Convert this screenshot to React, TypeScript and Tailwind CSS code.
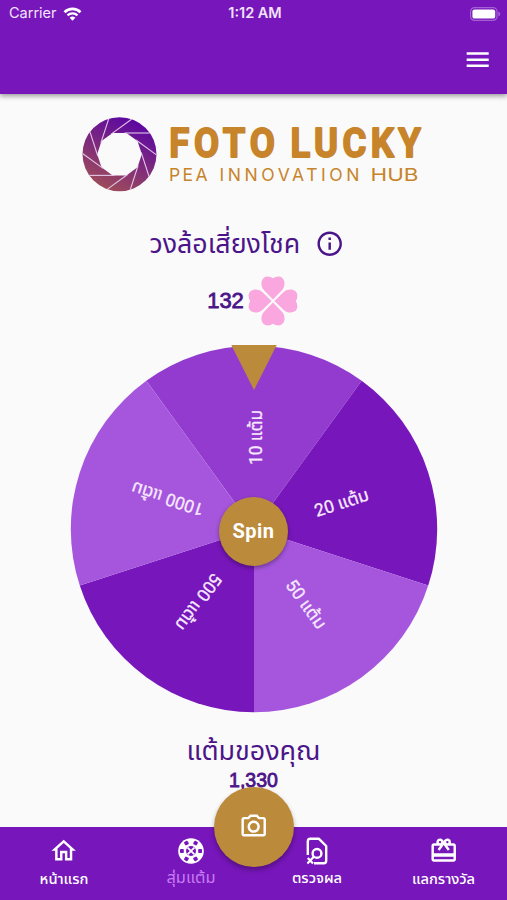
import {
  MdInfoOutline,
  MdMenu,
  MdOutlineHome,
  MdOutlinePhotoCamera,
  MdOutlineRedeem,
} from "react-icons/md";

const prizes = [
  { text: "10 แต้ม", angle: -90, color: "#933bcf", width: 55 },
  { text: "20 แต้ม", angle: -18, color: "#7716ba", width: 56 },
  { text: "50 แต้ม", angle: 54, color: "#a556dd", width: 56 },
  { text: "500 แต้ม", angle: 126, color: "#7716ba", width: 66 },
  { text: "1000 แต้ม", angle: 198, color: "#a556dd", width: 75 },
];

const RADIUS = 183.2;

function slicePath(angle: number) {
  const point = (deg: number) => {
    const rad = (deg * Math.PI) / 180;
    return `${RADIUS * Math.cos(rad)} ${RADIUS * Math.sin(rad)}`;
  };
  return `M0 0 L${point(angle - 36)} A${RADIUS} ${RADIUS} 0 0 1 ${point(angle + 36)} Z`;
}

function StatusBar() {
  return (
    <div className="grid h-[27px] grid-cols-3 items-center pl-[9px] pr-[6px] text-[14.5px] leading-none text-[#f3e3fb]">
      <div className="flex items-center gap-[6px]">
        <span>Carrier</span>
        <svg width="19" height="14" viewBox="0 0 18 14" fill="none">
          <path d="M1 5.2a11.4 11.4 0 0 1 16 0" stroke="#fff" strokeWidth="2.7" />
          <path d="M4 8.4a7.2 7.2 0 0 1 10 0" stroke="#fff" strokeWidth="2.3" />
          <path d="M9 13.8 6.1 10.8a4.2 4.2 0 0 1 5.8 0z" fill="#fff" />
        </svg>
      </div>
      <span className="text-center font-semibold">1:12 AM</span>
      <svg className="justify-self-end" width="31" height="14" viewBox="0 0 31 14">
        <rect x=".6" y=".6" width="26.4" height="12.8" rx="4" fill="none" stroke="#a561d4" strokeWidth="1.2" />
        <rect x="2.4" y="2.4" width="22.8" height="9.2" rx="2.2" fill="#fff" />
        <path d="M28.3 4.6v4.8q2-.8 2-2.4t-2-2.4" fill="#a561d4" />
      </svg>
    </div>
  );
}

function Logo() {
  return (
    <svg width="507" height="100" viewBox="0 105 507 100">
      <defs>
        <linearGradient id="lens" x1="0.75" y1="0.05" x2="0.3" y2="1">
          <stop offset="0" stopColor="#5b06a3" />
          <stop offset="1" stopColor="#a04e58" />
        </linearGradient>
      </defs>
      <g transform="translate(119.5 154.2)">
        <circle r="37" fill="url(#lens)" />
        <polygon
          fill="#fafafa"
          points="-6.9,-21.2 6.9,-21.2 18,-13.1 22.3,0 18,13.1 6.9,21.2 -6.9,21.2 -18,13.1 -22.3,0 -18,-13.1"
        />
        {[0, 36, 72, 108, 144, 180, 216, 252, 288, 324].map((a) => (
          <path key={a} d="M5-21.2H30.3" transform={`rotate(${a})`} stroke="#e3c6e8" strokeWidth="1.1" />
        ))}
      </g>
      <g fill="#c7842a" className="font-['Roboto'] text-[40.5px] font-bold" stroke="#c7842a" strokeWidth="1.8" strokeLinejoin="round">
        <text transform="translate(169.2 157) scale(.9 1)" textLength="117.5" lengthAdjust="spacing">FOTO</text>
        <text transform="translate(290.4 157) scale(.9 1)" textLength="145" lengthAdjust="spacing">LUCKY</text>
      </g>
      <g fill="#c7842a" className="font-['Inter'] text-[17.5px]">
        <text x="169" y="181" textLength="38.5" lengthAdjust="spacing">PEA</text>
        <text x="219.5" y="181" textLength="140" lengthAdjust="spacing">INNOVATION</text>
        <text x="370.5" y="181" textLength="48" lengthAdjust="spacingAndGlyphs">HUB</text>
      </g>
    </svg>
  );
}

function Clover() {
  return (
    <svg width="50" height="50" viewBox="-25 -25 50 50" fill="#faa6df">
      {[0, 90, 180, 270].map((a) => (
        <path
          key={a}
          transform={`rotate(${a})`}
          d="M0-1.4-9.2-11C-13.6-16-11.6-24.4-5.6-24.4Q-2-24.4 0-22.8 2-24.4 5.6-24.4C11.6-24.4 13.6-16 9.2-11Z"
        />
      ))}
    </svg>
  );
}

function Wheel() {
  return (
    <div className="relative mx-auto h-[368px] w-[368px]">
      <svg width="368" height="368" viewBox="-184 -184 368 368">
        {prizes.map((p) => (
          <path key={p.text} d={slicePath(p.angle)} fill={p.color} />
        ))}
        {prizes.map((p) => (
          <text
            key={p.text}
            x="91.5"
            y="8"
            textAnchor="middle"
            textLength={p.width}
            lengthAdjust="spacingAndGlyphs"
            transform={`rotate(${p.angle})`}
            fill="#f8e9ff"
            stroke="#f8e9ff"
            strokeWidth=".3"
            className="font-['Roboto','Noto_Sans_Thai',sans-serif] text-[17.5px]"
          >
            {p.text}
          </text>
        ))}
        <path d="M-23-184.5h46L0-139z" fill="#bc8a3b" />
      </svg>
      <button className="absolute left-[149.5px] top-[151.5px] flex h-[69px] w-[69px] items-center justify-center rounded-full bg-[#bc8a3b] font-['Roboto'] text-[20px] font-bold tracking-[0.5px] text-white shadow-[0_2px_4px_rgba(0,0,0,0.35)]">
        Spin
      </button>
    </div>
  );
}

function ChipIcon() {
  return (
    <svg width="26" height="26" viewBox="-13 -13 26 26">
      <circle r="12.8" fill="#fff" />
      {[0, 60, 120, 180, 240, 300].map((a) => (
        <rect key={a} x="-2" y="-11" width="4" height="3.8" rx=".8" transform={`rotate(${a + 30})`} fill="#7716ba" />
      ))}
      <circle r="5" fill="#7716ba" />
      <path d="M-3.4-3.4 3.4 3.4M3.4-3.4-3.4 3.4" stroke="#fff" strokeWidth="1.8" />
    </svg>
  );
}

function CheckResultIcon() {
  return (
    <svg width="22" height="28" viewBox="0 0 22 28" fill="none" stroke="#fff" strokeWidth="2.4">
      <path d="M1.8 18V4.4Q1.8 1.8 4.2 1.8H13L20.2 9V23.8Q20.2 26.2 17.8 26.2H8" strokeLinejoin="round" />
      <circle cx="11" cy="16.4" r="4.4" />
      <path d="M8 19.6 1.4 26.4M1.8 21 7 26.4" strokeWidth="2.2" />
    </svg>
  );
}

function BottomBar() {
  return (
    <nav className="relative mt-auto grid h-[73.5px] w-full grid-cols-[128px_126px_126px_127px] bg-[#7716ba] text-[14.7px] font-medium text-white">
      <div className="flex flex-col items-center pt-[9px]">
        <MdOutlineHome size={29.4} />
        <span className="leading-[28px]">หน้าแรก</span>
      </div>
      <div className="flex flex-col items-center pt-[11px]">
        <ChipIcon />
        <span className="text-[16.4px] font-normal leading-[27px] text-[#c67bf3]">สุ่มแต้ม</span>
      </div>
      <div className="flex flex-col items-center pt-[10px]">
        <CheckResultIcon />
        <span className="leading-[26px]">ตรวจผล</span>
      </div>
      <div className="flex flex-col items-center pt-[9px]">
        <MdOutlineRedeem size={29.4} />
        <span className="leading-[28px]">แลกรางวัล</span>
      </div>
      <button className="absolute -top-[40px] left-[214px] flex h-[80px] w-[80px] items-center justify-center rounded-full bg-[#bc8a3b] shadow-[0_3px_5px_rgba(0,0,0,0.3)]">
        <MdOutlinePhotoCamera size={29.4} />
      </button>
    </nav>
  );
}

export default function App() {
  return (
    <div className="flex h-[900px] w-[507px] flex-col overflow-hidden bg-[#fafafa] font-['Inter','Noto_Sans_Thai',sans-serif] text-[#4b1489]">
      <header className="h-[93.5px] shrink-0 bg-[#7716ba] text-white shadow-[0_2px_5px_rgba(0,0,0,0.4)]">
        <StatusBar />
        <div className="flex h-[66px] items-center justify-end pr-[15px]">
          <MdMenu size={29.4} />
        </div>
      </header>
      <main className="flex flex-col pt-[11.5px]">
        <Logo />
        <div className="mt-[19px] flex h-[40px] items-center justify-center gap-[15px] pr-[13px]">
          <span className="pb-[2px] text-[26.8px] leading-none">วงล้อเสี่ยงโชค</span>
          <MdInfoOutline size={29.4} />
        </div>
        <div className="mt-[12px] flex h-[50px] items-center justify-center gap-[4px] pr-[2px] font-['Liberation_Sans'] text-[22px] [-webkit-text-stroke:0.8px]">
          <span className="-mt-[2px]">132</span>
          <Clover />
        </div>
        <div className="mt-[19px]">
          <Wheel />
        </div>
        <div className="mt-[17px] text-center text-[26.9px] leading-[40px]">แต้มของคุณ</div>
        <div className="-mt-[1px] text-center font-['Liberation_Sans'] text-[19.5px] leading-[22px] [-webkit-text-stroke:0.8px]">1,330</div>
      </main>
      <BottomBar />
    </div>
  );
}
